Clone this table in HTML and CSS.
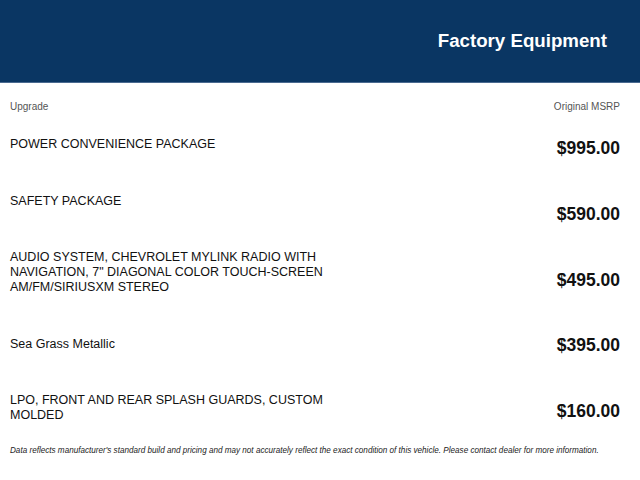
FILE: index.html
```html
<!DOCTYPE html>
<html>
<head>
<meta charset="utf-8">
<link rel="stylesheet" href="styles.css">
</head>
<body>
<header class="banner">
  <h1 class="banner-title">Factory Equipment</h1>
</header>
<main class="content">
  <div class="labels">
    <span>Upgrade</span>
    <span>Original MSRP</span>
  </div>
  <div class="table">
    <div class="col-desc">
      <div class="desc">POWER CONVENIENCE PACKAGE</div>
      <div class="desc">SAFETY PACKAGE</div>
      <div class="desc">AUDIO SYSTEM, CHEVROLET MYLINK RADIO WITH<br>NAVIGATION, 7" DIAGONAL COLOR TOUCH-SCREEN<br>AM/FM/SIRIUSXM STEREO</div>
      <div class="desc">Sea Grass Metallic</div>
      <div class="desc">LPO, FRONT AND REAR SPLASH GUARDS, CUSTOM<br>MOLDED</div>
    </div>
    <div class="col-price">
      <div class="price">$995.00</div>
      <div class="price">$590.00</div>
      <div class="price">$495.00</div>
      <div class="price">$395.00</div>
      <div class="price">$160.00</div>
    </div>
  </div>
  <p class="disclaimer">Data reflects manufacturer's standard build and pricing and may not accurately reflect the exact condition of this vehicle. Please contact dealer for more information.</p>
</main>
</body>
</html>
```
FILE: styles.css
```css
html, body {
  margin: 0;
  padding: 0;
  background: #ffffff;
  font-family: "Liberation Sans", Arial, sans-serif;
  color: #111111;
}

.banner {
  height: 82px;
  background: #0a3663;
  border-bottom: 1px solid #4a6a90;
  display: flex;
  align-items: center;
  justify-content: flex-end;
  padding-right: 33px;
}

.banner-title {
  margin: 0;
  color: #ffffff;
  font-size: 18.7px;
  font-weight: bold;
  line-height: 22px;
}

.content {
  padding: 0 20px 0 10px;
}

.labels {
  display: flex;
  justify-content: space-between;
  font-size: 10px;
  line-height: 13px;
  color: #555555;
  margin-top: 17px;
}

.table {
  display: flex;
  justify-content: space-between;
}

.col-desc {
  display: flex;
  flex-direction: column;
  padding-top: 24px;
}

.desc {
  font-size: 12.5px;
  line-height: 14.7px;
  padding-bottom: 42px;
}

.desc:last-child {
  padding-bottom: 0;
}

.col-price {
  display: flex;
  flex-direction: column;
  padding-top: 25px;
}

.price {
  font-size: 17.5px;
  font-weight: bold;
  line-height: 21px;
  height: 65.75px;
  text-align: right;
}

.price:last-child {
  height: 21px;
}

.disclaimer {
  margin: 23px 0 0;
  font-size: 8.15px;
  line-height: 10px;
  font-style: italic;
  color: #222222;
  white-space: nowrap;
}
```
